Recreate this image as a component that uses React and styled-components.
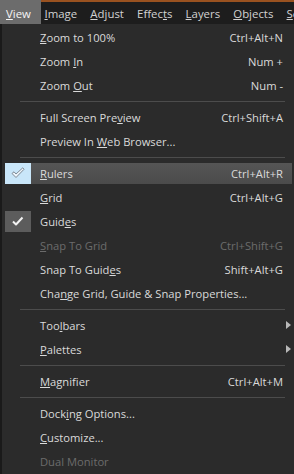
import React from "react";
import styled, { createGlobalStyle } from "styled-components";

const GlobalStyle = createGlobalStyle`
  html, body {
    margin: 0;
    padding: 0;
    background: #2b2b2b;
  }
  body {
    font-family: "Open Sans", "Noto Sans", sans-serif;
    font-size: 11.2px;
    color: #dadada;
  }
`;

const barItems = [
  { label: "View", active: true },
  { label: "Image" },
  { label: "Adjust" },
  { label: "Effects", at: 5 },
  { label: "Layers" },
  { label: "Objects" },
  { label: "Selections" },
];

// u: index of the underlined letter
const menu = [
  { label: "Zoom to 100%", u: 0, shortcut: "Ctrl+Alt+N" },
  { label: "Zoom In", u: 5, shortcut: "Num +" },
  { label: "Zoom Out", u: 5, shortcut: "Num -" },
  { sep: true },
  { label: "Full Screen Preview", u: 15, shortcut: "Ctrl+Shift+A" },
  { label: "Preview In Web Browser...", u: 11 },
  { sep: true },
  { label: "Rulers", u: 0, shortcut: "Ctrl+Alt+R", check: "hover", hover: true },
  { label: "Grid", u: 0, shortcut: "Ctrl+Alt+G" },
  { label: "Guides", u: 4, check: "on" },
  { label: "Snap To Grid", u: 0, shortcut: "Ctrl+Shift+G", disabled: true },
  { label: "Snap To Guides", u: 12, shortcut: "Shift+Alt+G" },
  { label: "Change Grid, Guide & Snap Properties...", u: 3 },
  { sep: true },
  { label: "Toolbars", u: 3, sub: true },
  { label: "Palettes", u: 0, sub: true },
  { sep: true },
  { label: "Magnifier", u: 0, shortcut: "Ctrl+Alt+M" },
  { sep: true },
  { label: "Docking Options...", u: 4 },
  { label: "Customize...", u: 0 },
  { label: "Dual Monitor", disabled: true },
];

const Mnemonic = ({ text, u }) => {
  if (u === undefined) return text;
  return (
    <>
      {text.slice(0, u)}
      <u>{text[u]}</u>
      {text.slice(u + 1)}
    </>
  );
};

const CheckIcon = ({ color, outline }) => (
  <svg width="14" height="12" viewBox="0 0 14 12">
    {outline ? (
      <path
        d="M1 6.5 L3 4.8 L5 7 L11.8 0.8 L13 2.3 L5 10.5 Z"
        fill="#eef6fc"
        stroke={color}
        strokeWidth="1"
        strokeLinejoin="round"
      />
    ) : (
      <path
        d="M2 6.5 L5 9.5 L11.5 2.5"
        fill="none"
        stroke={color}
        strokeWidth="2"
        strokeLinejoin="round"
      />
    )}
  </svg>
);

const Arrow = () => (
  <svg width="5" height="8" viewBox="0 0 5 8">
    <path d="M0 0 L5 4 L0 8 Z" fill="#b8b8b8" />
  </svg>
);

const App = () => {
  return (
    <Page>
      <GlobalStyle />
      <MenuBar>
        {barItems.map((b) => (
          <BarItem key={b.label} $active={b.active}>
            <Mnemonic text={b.label} u={b.at ?? 0} />
          </BarItem>
        ))}
      </MenuBar>
      <Menu>
        {menu.map((m, i) =>
          m.sep ? (
            <Separator key={i} />
          ) : (
            <Item key={i} $hover={m.hover} $disabled={m.disabled}>
              <IconSlot $check={m.check}>
                {m.check === "hover" && <CheckIcon color="#7d8894" outline />}
                {m.check === "on" && <CheckIcon color="#f2f2f2" />}
              </IconSlot>
              <Label>
                <Mnemonic text={m.label} u={m.u} />
              </Label>
              {m.shortcut && <Shortcut>{m.shortcut}</Shortcut>}
              <Trail>{m.sub && <Arrow />}</Trail>
            </Item>
          )
        )}
      </Menu>
    </Page>
  );
};

const Page = styled.div`
  width: 294px;
  height: 474px;
  overflow: hidden;
  display: flex;
  flex-direction: column;
  background: #2b2b2b;
`;

const MenuBar = styled.div`
  display: flex;
  height: 24px;
  flex-shrink: 0;
  background: #1d1d1d;
  box-shadow: inset 0 2px 0 #9a5220;
  white-space: nowrap;
  overflow: hidden;
`;

const BarItem = styled.div`
  display: flex;
  align-items: center;
  flex-shrink: 0;
  padding: ${(p) => (p.$active ? "2px 10px 0 6px" : "2px 6.6px 0")};
  margin-right: ${(p) => (p.$active ? "-3px" : "0")};
  background: ${(p) => (p.$active ? "#6c6c6c" : "transparent")};
  color: ${(p) => (p.$active ? "#f4f4f4" : "#d2d2d2")};
  font-size: 11.4px;
`;

const Menu = styled.div`
  flex: 1;
  display: flex;
  flex-direction: column;
  padding-top: 1px;
  border-left: 2px solid #1a1a1a;
`;

const Separator = styled.div`
  height: 8px;
  display: flex;
  align-items: center;
  padding: 0 9px 0 18px;
  &::after {
    content: "";
    flex: 1;
    height: 1px;
    background: #4c4c4c;
  }
`;

const Item = styled.div`
  display: flex;
  align-items: center;
  height: 21px;
  margin: 1.5px 2px 1.5px 3px;
  background: ${(p) =>
    p.$hover ? "linear-gradient(#555555, #4b4b4b)" : "transparent"};
  color: ${(p) => (p.$disabled ? "#6b6b6b" : "#dadada")};
  white-space: nowrap;
`;

const IconSlot = styled.div`
  width: 26px;
  height: 21px;
  flex-shrink: 0;
  display: flex;
  align-items: center;
  justify-content: center;
  background: ${(p) =>
    p.$check === "hover" ? "#c9e6f9" : p.$check === "on" ? "#5c5c5c" : "transparent"};
`;

const Label = styled.span`
  flex: 1;
  padding-left: 9px;
`;

const Shortcut = styled.span`
  text-align: right;
`;

const Trail = styled.span`
  width: 8px;
  flex-shrink: 0;
  display: flex;
  align-items: center;
  justify-content: flex-end;
  padding-right: 1px;
`;

export default App;
